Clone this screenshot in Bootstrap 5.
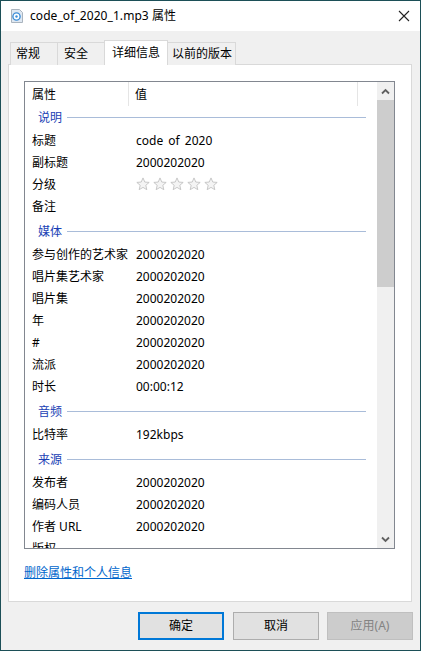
<!DOCTYPE html>
<html lang="zh">
<head>
<meta charset="utf-8">
<title>属性</title>
<link rel="stylesheet" href="https://cdn.jsdelivr.net/npm/bootstrap@5.3.0/dist/css/bootstrap.min.css">
<style>
html,body{height:100%;margin:0;overflow:hidden}
body{font-family:"Noto Sans","Noto Sans CJK SC",sans-serif;font-size:12px;line-height:16px;color:#000;background:#f0f0f0}
.win{width:421px;height:651px;border:1px solid #1c4f57;background:#f0f0f0}
.titlebar{height:30px;background:#fff;padding-left:10px}
.titlebar .ttl{margin-left:7px;font-size:12px;letter-spacing:.07px;color:#000}
.closex{width:14px;height:14px;margin-right:9px}
.tabs-row{height:34px;padding:11px 0 0 9px;margin:0;list-style:none;position:relative;z-index:1}
.tb{height:23px;border:1px solid #d9d9d9;border-bottom:0;border-left:0;background:#f0f0f0;padding:3px 0 0 6px;white-space:nowrap}
.tb:first-child{border-left:1px solid #d9d9d9;padding-left:5px}
.tb.act{height:25px;margin-top:-2px;background:#fff;border-left:1px solid #d9d9d9;margin-left:-1px;padding:4px 0 0 7px;position:relative}
.tb.after{margin-left:-1px;border-left:0;padding-left:5px}
.panel{margin:-1px 0 0 7px;width:404px;height:538px;background:#fff;border:1px solid #d9d9d9;padding:16px 15px 0}
.box{width:371px;height:468px;border:1px solid #828790;overflow:hidden;background:#fff}
.lst{width:352px;padding:0;overflow:hidden}
.hdr{height:24px}
.hdr .c1{width:104px;padding:5px 0 0 7px;border-right:1px solid #e5e5e5;height:24px}
.hdr .c2{width:229px;padding:5px 0 0 6px;border-right:1px solid #e5e5e5;height:24px}
.rw{height:22px;padding-top:4px}
.rw .k{width:105px;padding-left:7px;white-space:nowrap}
.rw .v{padding-left:6px;word-spacing:2px}
.grp{height:26px;padding:7px 0 0 13px;color:#1a3fb5;align-items:flex-start}
.grp i{flex:1;height:1px;background:#a9bcd9;margin:7px 11px 0 5px}
.grp.first{height:23px;padding-top:4px}
.sb{width:17px;background:#f0f0f0}
.sb .ar{height:18px}
.sb .th{height:187px;background:#cdcdcd}
.rw .stars{padding-left:6px}
.stars svg{width:14px;height:14px;margin:0 3.1px 0 0;display:block}
.lnk{display:block;margin-top:16px;color:#0066cc;text-decoration:underline}
.foot{padding:10px 7px 0 137px;gap:9px}
.wb{width:86px;height:28px;border:1px solid #adadad;background:#e1e1e1;border-radius:0;padding:0;font-size:12px;line-height:26px;color:#000}
.wb.pri{border:2px solid #0078d7;line-height:24px}
.wb.dis{background:#cccccc;border-color:#bfbfbf;color:#838383;opacity:1;margin-left:-1px}
</style>
</head>
<body>
<div class="win d-flex flex-column">
  <div class="titlebar d-flex align-items-center">
    <svg width="12" height="14" viewBox="0 0 12 14"><path d="M.5.5h8l3 3v10H.5z" fill="#dfe8f2" stroke="#aab4be"/><circle cx="5.5" cy="7.5" r="3.6" fill="#fff" stroke="#3c8ed8" stroke-width="1.4"/><circle cx="5.5" cy="7.5" r="1.2" fill="#3c8ed8"/></svg>
    <span class="ttl">code_of_2020_1.mp3 属性</span>
    <svg class="closex ms-auto" viewBox="0 0 14 14"><path d="M2 2l10 10M12 2L2 12" stroke="#222" stroke-width="1.1" fill="none"/></svg>
  </div>
  <ul class="tabs-row d-flex">
    <li class="tb" style="width:48px">常规</li>
    <li class="tb" style="width:47px">安全</li>
    <li class="tb act" style="width:64px">详细信息</li>
    <li class="tb after" style="width:69px">以前的版本</li>
  </ul>
  <div class="panel">
    <div class="box d-flex">
      <div class="lst flex-grow-1">
        <div class="hdr d-flex"><div class="c1">属性</div><div class="c2">值</div></div>
        <div class="grp first d-flex"><span>说明</span><i></i></div>
        <div class="rw d-flex"><div class="k">标题</div><div class="v">code of 2020</div></div>
        <div class="rw d-flex"><div class="k">副标题</div><div class="v">2000202020</div></div>
        <div class="rw d-flex"><div class="k">分级</div><div class="v stars d-flex" id="st"></div></div>
        <div class="rw d-flex"><div class="k">备注</div></div>
        <div class="grp d-flex"><span>媒体</span><i></i></div>
        <div class="rw d-flex"><div class="k">参与创作的艺术家</div><div class="v">2000202020</div></div>
        <div class="rw d-flex"><div class="k">唱片集艺术家</div><div class="v">2000202020</div></div>
        <div class="rw d-flex"><div class="k">唱片集</div><div class="v">2000202020</div></div>
        <div class="rw d-flex"><div class="k">年</div><div class="v">2000202020</div></div>
        <div class="rw d-flex"><div class="k">#</div><div class="v">2000202020</div></div>
        <div class="rw d-flex"><div class="k">流派</div><div class="v">2000202020</div></div>
        <div class="rw d-flex"><div class="k">时长</div><div class="v">00:00:12</div></div>
        <div class="grp d-flex"><span>音频</span><i></i></div>
        <div class="rw d-flex"><div class="k">比特率</div><div class="v">192kbps</div></div>
        <div class="grp d-flex"><span>来源</span><i></i></div>
        <div class="rw d-flex"><div class="k">发布者</div><div class="v">2000202020</div></div>
        <div class="rw d-flex"><div class="k">编码人员</div><div class="v">2000202020</div></div>
        <div class="rw d-flex"><div class="k">作者 URL</div><div class="v">2000202020</div></div>
        <div class="rw d-flex"><div class="k">版权</div></div>
      </div>
      <div class="sb d-flex flex-column">
        <div class="ar d-flex align-items-center justify-content-center"><svg width="9" height="7" viewBox="0 0 9 7"><path d="M1 5.5l3.5-3.5 3.5 3.5" stroke="#606060" stroke-width="1.8" fill="none"/></svg></div>
        <div class="th"></div>
        <div class="ar mt-auto d-flex align-items-center justify-content-center"><svg width="9" height="7" viewBox="0 0 9 7"><path d="M1 1.5l3.5 3.5 3.5-3.5" stroke="#606060" stroke-width="1.8" fill="none"/></svg></div>
      </div>
    </div>
    <a class="lnk" href="#">删除属性和个人信息</a>
  </div>
  <div class="foot d-flex">
    <button type="button" class="btn wb pri">确定</button>
    <button type="button" class="btn wb">取消</button>
    <button type="button" class="btn wb dis" disabled>应用(A)</button>
  </div>
</div>
<script>
var s='<svg viewBox="0 0 15 15"><path d="M7.5 1l1.9 4.4 4.7.4-3.6 3.1 1.1 4.7-4.1-2.5-4.1 2.5 1.1-4.7L.9 5.8l4.7-.4z" fill="#f4f4f4" stroke="#c4c4c4"/></svg>';
document.getElementById('st').innerHTML=s+s+s+s+s;
</script>
<script src="https://cdn.jsdelivr.net/npm/bootstrap@5.3.0/dist/js/bootstrap.bundle.min.js"></script>
</body>
</html>
